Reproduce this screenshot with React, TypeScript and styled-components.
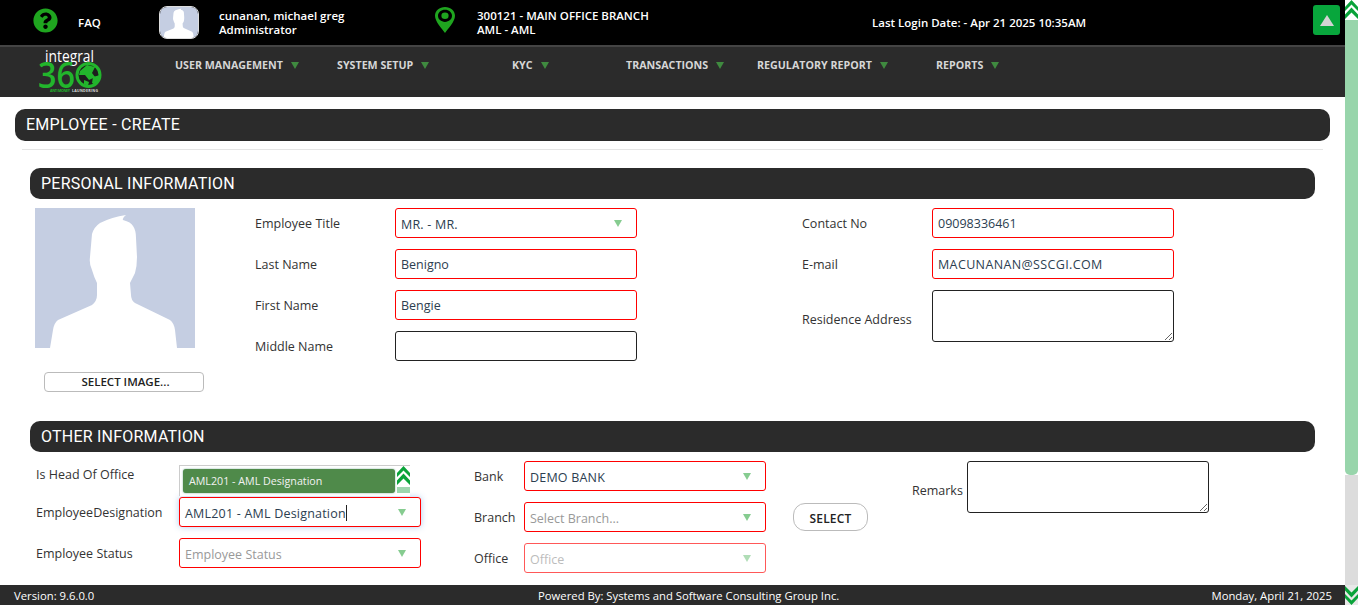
import React from "react";
import styled, { createGlobalStyle } from "styled-components";
import { FaQuestionCircle } from "react-icons/fa";

const GlobalStyle = createGlobalStyle`
  html, body {
    margin: 0;
    height: 100%;
    overflow: hidden;
    background: #fff;
    font-family: "Open Sans", "Noto Sans", "Liberation Sans", sans-serif;
  }
  * {
    box-sizing: border-box;
  }
`;

// 상단 메뉴 목록
const menus = [
  { label: "USER MANAGEMENT", width: 162 },
  { label: "SYSTEM SETUP", width: 175 },
  { label: "KYC", width: 114 },
  { label: "TRANSACTIONS", width: 131 },
  { label: "REGULATORY REPORT", width: 179 },
  { label: "REPORTS", width: 120 },
];

const Silhouette: React.FC = () => (
  <svg viewBox="0 0 160 140" width="100%" height="100%" preserveAspectRatio="none">
    <rect width="160" height="140" fill="#c5cee2" />
    <path
      fill="#fff"
      d="M91 7 Q87 10 88 12 Q96 14 98 18 Q101 22 101 30 L102 49 Q102 58 100 65 Q97 71 95 75 L96 87 Q96 92 100 95 L135 112 Q139 115 140 122 L142 140 L15 140 L18 122 Q19 115 23 112 L57 97 Q62 93 62 87 L62 75 Q59 69 57 62 Q54 56 55 49 L57 26 Q59 19 65 15 Q77 9 91 7 Z"
    />
  </svg>
);

const PinIcon: React.FC = () => (
  <svg viewBox="0 0 20 29" width="20" height="26" preserveAspectRatio="none">
    <path
      fill="#1fa51f"
      fillRule="evenodd"
      d="M10 0 C4.4 0 0 4.3 0 9.8 C0 16.5 7 24 10 29 C13 24 20 16.5 20 9.8 C20 4.3 15.6 0 10 0 Z M10 3 C14 3 17 6 17 9.8 C17 13.6 14 16.6 10 16.6 C6 16.6 3 13.6 3 9.8 C3 6 6 3 10 3 Z"
    />
    <circle cx="10" cy="9.8" r="3.6" fill="#1fa51f" />
  </svg>
);

const Logo: React.FC = () => (
  <svg viewBox="0 0 70 50" width="70" height="50" overflow="visible">
    <text
      x="10"
      y="15"
      fill="#fff"
      fontFamily="Open Sans, sans-serif"
      fontSize="15.5"
      fontWeight="500"
      textLength="49"
      lengthAdjust="spacingAndGlyphs"
    >
      integral
    </text>
    <text
      x="3"
      y="41"
      fill="#22b52c"
      fontFamily="Open Sans, sans-serif"
      fontSize="36"
      fontWeight="600"
      textLength="37"
      lengthAdjust="spacingAndGlyphs"
    >
      36
    </text>
    <circle cx="53.5" cy="28" r="11.5" fill="#1d1d1d" stroke="#22b52c" strokeWidth="3" />
    <path
      fill="#22b52c"
      d="M45 24 L52 18 L60 20 L57 26 L60 30 L54 33 L50 28 L44 28 Z M58 30 L65 28 L64 34 L60 38 L57 36 Z M49 33 L54 35 L53 39 L49 37 Z"
    />
    <text x="15" y="45" fill="#22b52c" fontFamily="Open Sans, sans-serif" fontSize="3.6" fontWeight="700" textLength="20">
      ANTI MONEY
    </text>
    <text x="37" y="45" fill="#ddd" fontFamily="Open Sans, sans-serif" fontSize="3.6" fontWeight="700" textLength="26">
      LAUNDERING
    </text>
  </svg>
);

const DoubleChevron: React.FC<{ $down?: boolean; $height?: number }> = ({ $down, $height = 20 }) => (
  <svg
    viewBox="0 0 13 20"
    width="13"
    height={$height}
    preserveAspectRatio="none"
    style={$down ? { transform: "scaleY(-1)" } : undefined}
  >
    <path fill="#0aa33a" d="M6.5 0 L13 7 L13 11 L6.5 4.5 L0 11 L0 7 Z M6.5 7.5 L13 14.5 L13 19 L6.5 12.5 L0 19 L0 14.5 Z" />
  </svg>
);

const App: React.FC = () => {
  return (
    <>
      <GlobalStyle />
      <Screen>
        <Main>
          <TopBar>
            <IconCell>
              <FaQuestionCircle size={25} color="#1fa51f" />
            </IconCell>
            <TopText>FAQ</TopText>
            <Avatar>
              <Silhouette />
            </Avatar>
            <TopText>
              cunanan, michael greg
              <br />
              Administrator
            </TopText>
            <IconCell>
              <PinIcon />
            </IconCell>
            <TopText>
              300121 - MAIN OFFICE BRANCH
              <br />
              AML - AML
            </TopText>
            <TopText>Last Login Date: - Apr 21 2025 10:35AM</TopText>
            <CollapseButton>
              <UpTriangle />
            </CollapseButton>
          </TopBar>
          <NavBar>
            <LogoBox>
              <Logo />
            </LogoBox>
            {menus.map((menu) => (
              <NavItem key={menu.label} $width={menu.width}>
                {menu.label}
                <NavArrow />
              </NavItem>
            ))}
          </NavBar>
          <Content>
            <PageTitle>EMPLOYEE - CREATE</PageTitle>
            <Divider />
            <SectionBar>PERSONAL INFORMATION</SectionBar>
            <PersonalBody>
              <PhotoColumn>
                <Photo>
                  <Silhouette />
                </Photo>
                <SelectImageButton>SELECT IMAGE...</SelectImageButton>
              </PhotoColumn>
              <FormGrid $labelWidth={140}>
                <FormLabel>Employee Title</FormLabel>
                <Combo>
                  <ComboValue>MR. - MR.</ComboValue>
                  <ComboArrow />
                </Combo>
                <FormLabel>Last Name</FormLabel>
                <TextField $required defaultValue="Benigno" />
                <FormLabel>First Name</FormLabel>
                <TextField $required defaultValue="Bengie" />
                <FormLabel>Middle Name</FormLabel>
                <TextField />
              </FormGrid>
              <FormGrid $labelWidth={130}>
                <FormLabel>Contact No</FormLabel>
                <TextField $required defaultValue="09098336461" />
                <FormLabel>E-mail</FormLabel>
                <TextField $required $spaced defaultValue="MACUNANAN@SSCGI.COM" />
                <FormLabel $nudge={6}>Residence Address</FormLabel>
                <TextArea />
              </FormGrid>
            </PersonalBody>
            <OtherBar>OTHER INFORMATION</OtherBar>
            <OtherBody>
              <FormGrid $labelWidth={143}>
                <FormLabel $nudge={6}>Is Head Of Office</FormLabel>
                <EmptyCell />
                <FormLabel>EmployeeDesignation</FormLabel>
                <FocusCombo>
                  <ComboValue>
                    AML201 - AML Designation
                    <Caret />
                  </ComboValue>
                  <ComboArrow />
                  <DropList>
                    <DropItem>AML201 - AML Designation</DropItem>
                    <DropScroll>
                      <DoubleChevron />
                      <DropThumb />
                    </DropScroll>
                  </DropList>
                </FocusCombo>
                <FormLabel>Employee Status</FormLabel>
                <Combo>
                  <ComboValue $muted>Employee Status</ComboValue>
                  <ComboArrow />
                </Combo>
              </FormGrid>
              <BankGrid>
                <FormLabel>Bank</FormLabel>
                <Combo>
                  <ComboValue>DEMO BANK</ComboValue>
                  <ComboArrow />
                </Combo>
                <FormLabel>Branch</FormLabel>
                <Combo>
                  <ComboValue $muted>Select Branch...</ComboValue>
                  <ComboArrow />
                </Combo>
                <SelectButton>SELECT</SelectButton>
                <FormLabel>Office</FormLabel>
                <Combo $disabled>
                  <ComboValue $muted>Office</ComboValue>
                  <ComboArrow />
                </Combo>
              </BankGrid>
              <RemarksRow>
                <FormLabel $nudge={6}>Remarks</FormLabel>
                <TextArea />
              </RemarksRow>
            </OtherBody>
          </Content>
          <Footer>
            <span>Version: 9.6.0.0</span>
            <span>Powered By: Systems and Software Consulting Group Inc.</span>
            <span>Monday, April 21, 2025</span>
          </Footer>
        </Main>
        <Rail>
          <RailCap>
            <DoubleChevron />
          </RailCap>
          <RailThumb />
          <RailTrack />
          <RailCap $bottom>
            <DoubleChevron $down />
          </RailCap>
        </Rail>
      </Screen>
    </>
  );
};

const Screen = styled.div`
  display: flex;
  height: 100vh;
  overflow: hidden;
`;

const Main = styled.div`
  flex: 1;
  min-width: 0;
  display: flex;
  flex-direction: column;
`;

const TopBar = styled.div`
  flex: none;
  height: 45px;
  background: #000;
  padding-left: 33px;
  display: grid;
  grid-template-columns: 45px 81px 60px 216px 42px 395px 441px 27px;
  align-items: center;
`;

const IconCell = styled.div`
  display: flex;
  align-items: center;
  padding-bottom: 5px;
`;

const TopText = styled.div`
  color: #fff;
  font-size: 11.5px;
  font-weight: 600;
  line-height: 14px;
  white-space: nowrap;
`;

const Avatar = styled.div`
  width: 40px;
  height: 33px;
  border-radius: 8px;
  border: 1px solid #ddd;
  overflow: hidden;
`;

const CollapseButton = styled.div`
  align-self: start;
  width: 27px;
  height: 30px;
  margin-top: 5px;
  border-radius: 3px;
  background: #08a63c;
  display: flex;
  align-items: center;
  justify-content: center;
`;

const UpTriangle = styled.div`
  width: 0;
  height: 0;
  border-left: 7px solid transparent;
  border-right: 7px solid transparent;
  border-bottom: 11px solid #d4d4d4;
`;

const NavBar = styled.div`
  flex: none;
  height: 52px;
  background: #2b2b2b;
  border-top: 2px solid #444;
  padding-left: 35px;
  display: flex;
  align-items: flex-start;
`;

const LogoBox = styled.div`
  width: 140px;
  height: 50px;
  flex: none;
`;

const NavItem = styled.div<{ $width: number }>`
  flex: none;
  width: ${(props) => props.$width}px;
  height: 36px;
  display: flex;
  align-items: center;
  gap: 8px;
  color: #d6d6d6;
  font-size: 10.7px;
  font-weight: 700;
  white-space: nowrap;
`;

const NavArrow = styled.i`
  width: 0;
  height: 0;
  border-left: 4px solid transparent;
  border-right: 4px solid transparent;
  border-top: 7px solid #3f8a3f;
`;

const Content = styled.div`
  flex: 1;
  min-height: 0;
  overflow: hidden;
  padding: 12px 15px 0;
`;

const PageTitle = styled.div`
  height: 32px;
  border-radius: 10px;
  background: #2b2b2b;
  color: #fff;
  padding-left: 11px;
  font-family: Roboto, "Liberation Sans", sans-serif;
  font-size: 16px;
  letter-spacing: 0.27px;
  line-height: 31px;
`;

const Divider = styled.div`
  height: 1px;
  margin: 8px 7px 0;
  background: #e5e5e5;
`;

const SectionBar = styled.div`
  height: 31px;
  margin: 18px 15px 0;
  border-radius: 10px;
  background: #2b2b2b;
  color: #fff;
  padding-left: 11px;
  font-family: Roboto, "Liberation Sans", sans-serif;
  font-size: 16px;
  letter-spacing: 0.22px;
  line-height: 31px;
`;

const OtherBar = styled(SectionBar)`
  margin-top: 29px;
`;

const PersonalBody = styled.div`
  margin: 9px 0 0 20px;
  display: grid;
  grid-template-columns: 220px 547px 1fr;
  align-items: start;
`;

const PhotoColumn = styled.div`
  width: 170px;
`;

const Photo = styled.div`
  width: 160px;
  height: 140px;
  line-height: 0;
`;

const SelectImageButton = styled.div`
  width: 160px;
  height: 20px;
  margin: 24px 0 0 9px;
  padding-left: 3px;
  border: 1px solid #bbb;
  border-radius: 4px;
  background: #fff;
  color: #222;
  font-size: 11.5px;
  font-weight: 600;
  line-height: 18px;
  text-align: center;
`;

const FormGrid = styled.div<{ $labelWidth: number }>`
  display: grid;
  grid-template-columns: ${(props) => props.$labelWidth}px 242px;
  row-gap: 11px;
  align-items: center;
`;

const FormLabel = styled.div<{ $nudge?: number }>`
  grid-column: 1;
  padding-top: ${(props) => props.$nudge ?? 0}px;
  color: #333;
  font-size: 12.5px;
  white-space: nowrap;
`;

const TextField = styled.input<{ $required?: boolean; $spaced?: boolean }>`
  width: 242px;
  height: 30px;
  padding: 0 5px;
  border: 1px solid ${(props) => (props.$required ? "#f00" : "#222")};
  border-radius: 3px;
  outline: none;
  color: #2c3e50;
  font-family: inherit;
  font-size: 12.5px;
  letter-spacing: ${(props) => (props.$spaced ? "0.37px" : "0")};
`;

const TextArea = styled.textarea`
  display: block;
  width: 242px;
  height: 52px;
  padding: 3px 5px;
  border: 1px solid #222;
  border-radius: 3px;
  outline: none;
  font-family: inherit;
`;

const Combo = styled.div<{ $disabled?: boolean }>`
  position: relative;
  width: 242px;
  height: 30px;
  padding: 0 14px 0 5px;
  border: 1px solid #f00;
  border-radius: 3px;
  background: #fff;
  display: flex;
  align-items: center;
  justify-content: space-between;
  opacity: ${(props) => (props.$disabled ? 0.65 : 1)};
`;

const FocusCombo = styled(Combo)`
  box-shadow: 0 0 6px rgba(80, 140, 220, 0.45);
`;

const ComboValue = styled.span<{ $muted?: boolean }>`
  padding-top: 2px;
  color: ${(props) => (props.$muted ? "#999" : "#2c3e50")};
  font-size: 12.5px;
  letter-spacing: ${(props) => (props.$muted ? "0" : "0.2px")};
  white-space: nowrap;
  display: flex;
  align-items: center;
`;

const Caret = styled.i`
  width: 1px;
  height: 16px;
  background: #222;
`;

const ComboArrow = styled.i`
  width: 0;
  height: 0;
  border-left: 4.5px solid transparent;
  border-right: 4.5px solid transparent;
  border-top: 7px solid #86cc90;
`;

const DropList = styled.div`
  position: absolute;
  left: -1px;
  bottom: 30px;
  width: 231px;
  height: 31px;
  padding: 3px 0 3px 3px;
  border-top: 1px solid #ccc;
  border-left: 1px solid #ccc;
  background: #fff;
  display: flex;
  gap: 2px;
`;

const DropItem = styled.div`
  width: 213px;
  height: 24px;
  padding-left: 6px;
  border-radius: 3px;
  background: #4f8a4a;
  box-shadow: 0 0 2px #7a9;
  color: #f2f2f2;
  font-size: 10.7px;
  font-weight: 500;
  line-height: 24px;
`;

const DropScroll = styled.div`
  width: 13px;
  margin-top: -3px;
  display: flex;
  flex-direction: column;
  gap: 1px;
  line-height: 0;
`;

const DropThumb = styled.div`
  flex: 1;
  background: #9dd6ae;
`;

const EmptyCell = styled.div`
  height: 30px;
`;

const OtherBody = styled.div`
  margin: 4px 0 0 21px;
  display: flex;
  align-items: flex-start;
`;

const BankGrid = styled.div`
  margin: 5px 0 0 53px;
  display: grid;
  grid-template-columns: 50px 242px 102px;
  row-gap: 11px;
  align-items: center;
`;

const SelectButton = styled.div`
  grid-area: 2 / 3;
  justify-self: end;
  width: 75px;
  height: 28px;
  border: 1px solid #bbb;
  border-radius: 12px;
  color: #222;
  font-size: 12px;
  font-weight: 600;
  letter-spacing: 0.15px;
  line-height: 29px;
  text-align: center;
`;

const RemarksRow = styled.div`
  margin: 5px 0 0 44px;
  display: grid;
  grid-template-columns: 55px 242px;
  align-items: center;
`;

const Footer = styled.div`
  flex: none;
  height: 20px;
  padding: 0 13px 0 14px;
  background: #2b2b2b;
  color: #fff;
  font-size: 11.3px;
  line-height: 21px;
  display: grid;
  grid-template-columns: 524px 1fr auto;
  white-space: nowrap;
`;

const Rail = styled.div`
  flex: none;
  width: 13px;
  display: flex;
  flex-direction: column;
`;

const RailCap = styled.div<{ $bottom?: boolean }>`
  flex: none;
  height: 20px;
  line-height: 0;
  background: ${(props) => (props.$bottom ? "#e8e8e8" : "#fff")};
`;

const RailThumb = styled.div`
  flex: none;
  height: 455px;
  border-radius: 0 0 5px 5px;
  background: #98d5ab;
`;

const RailTrack = styled.div`
  flex: 1;
  background: #dcdcdc;
`;

export default App;
